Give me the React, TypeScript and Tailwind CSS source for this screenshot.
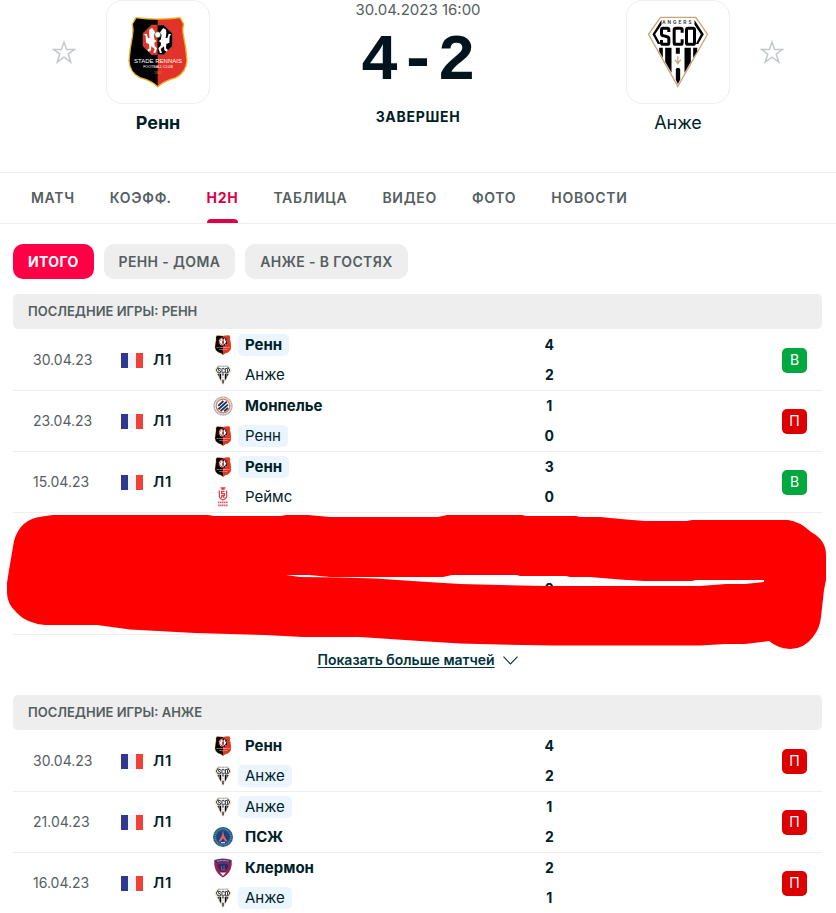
import type { ReactNode } from "react";

type Club = "rennes" | "angers" | "montpellier" | "reims" | "psg" | "clermont";

type Side = { club: Club; name: string; score: number; winner?: boolean };

type Match = {
    date: string;
    home: Side;
    away: Side;
    result: "В" | "П";
};

const rennesMatches: Match[] = [
    {
        date: "30.04.23",
        home: { club: "rennes", name: "Ренн", score: 4, winner: true },
        away: { club: "angers", name: "Анже", score: 2 },
        result: "В",
    },
    {
        date: "23.04.23",
        home: { club: "montpellier", name: "Монпелье", score: 1, winner: true },
        away: { club: "rennes", name: "Ренн", score: 0 },
        result: "П",
    },
    {
        date: "15.04.23",
        home: { club: "rennes", name: "Ренн", score: 3, winner: true },
        away: { club: "reims", name: "Реймс", score: 0 },
        result: "В",
    },
];

const angersMatches: Match[] = [
    {
        date: "30.04.23",
        home: { club: "rennes", name: "Ренн", score: 4, winner: true },
        away: { club: "angers", name: "Анже", score: 2 },
        result: "П",
    },
    {
        date: "21.04.23",
        home: { club: "angers", name: "Анже", score: 1 },
        away: { club: "psg", name: "ПСЖ", score: 2, winner: true },
        result: "П",
    },
    {
        date: "16.04.23",
        home: { club: "clermont", name: "Клермон", score: 2, winner: true },
        away: { club: "angers", name: "Анже", score: 1 },
        result: "П",
    },
];

const tabs = ["Матч", "Коэфф.", "H2H", "Таблица", "Видео", "Фото", "Новости"];
const filters = ["Итого", "Ренн - Дома", "Анже - В гостях"];

function RennesLogo({ className }: { className: string }) {
    return (
        <svg viewBox="262 46 184 216" className={className} aria-hidden="true">
            <path
                d="M288 51 Q353 60 420 51 L431 70 Q426 86 431 108 Q438 140 441 180 Q438 216 408 231 Q372 241 353 258 Q336 241 300 231 Q269 216 267 180 Q270 140 277 108 Q281 86 277 70 Z"
                fill="#000"
            />
            <path d="M353 56 Q390 56 420 51 L431 70 Q426 86 431 108 Q438 140 441 180 Q438 216 408 231 Q372 241 353 258 Z" fill="#e1332a" />
            <path
                d="M288 51 Q353 60 420 51 L431 70 Q426 86 431 108 Q438 140 441 180 Q438 216 408 231 Q372 241 353 258 Q336 241 300 231 Q269 216 267 180 Q270 140 277 108 Q281 86 277 70 Z"
                fill="none"
                stroke="#f5b324"
                strokeWidth="4"
            />
            <path d="M353 73 H335 L309 98 V136 L335 162 H353 Z" fill="#e1332a" />
            <path d="M353 73 H371 L397 98 V136 L371 162 H353 Z" fill="#000" />
            <path d="M353 73 H371 L397 98 V136 L371 162 H335 L309 136 V98 L335 73 Z" fill="none" stroke="#8d6a68" strokeWidth="1.5" />
            <path
                d="M336 82 L341 88 L347 97 L341 103 L344 117 L350 121 L343 126 L344 135 L351 143 L346 157 L340 156 L344 145 L334 137 L333 149 L326 153 L322 148 L328 143 L327 130 L318 126 L317 106 L312 101 L320 99 L324 112 L329 112 L327 96 L328 87 Z"
                fill="#fff"
            />
            <path
                d="M370 82 L365 88 L359 97 L365 103 L362 117 L356 121 L363 126 L362 135 L355 143 L360 157 L366 156 L362 145 L372 137 L373 149 L380 153 L384 148 L378 143 L379 130 L388 126 L389 106 L394 101 L386 99 L382 112 L377 112 L379 96 L378 87 Z"
                fill="#fff"
            />
            <circle cx="353" cy="102" r="9" fill="#fff" stroke="#444" strokeWidth="2" />
            <g fill="#fff" textAnchor="middle" fontFamily="'Liberation Sans', sans-serif">
                <text x="354" y="188" fontSize="18">STADE RENNAIS</text>
                <text x="354" y="203" fontSize="11">FOOTBALL CLUB</text>
                <text x="354" y="220" fontSize="11" fill="#c98b2e">1901</text>
            </g>
        </svg>
    );
}

function AngersLogo({ className }: { className: string }) {
    return (
        <svg viewBox="140 46 185 216" className={className} aria-hidden="true">
            <path d="M180 50 H286 L321 101 L232 257 L144 101 Z" fill="#fff" stroke="#c6a878" strokeWidth="4" />
            <path d="M183 58 L156 101 L172 130 L180 130 L164 101 L183 72 Z" fill="#000" />
            <path d="M282 58 L310 101 L293 130 L286 130 L301 101 L282 72 Z" fill="#000" />
            <path
                d="M176 141 H187 V171 L176 152 Z M194 141 H213 V216 L194 183 Z M226 141 H238 V159 H226 Z M252 141 H271 V183 L252 216 Z M278 141 H290 V152 L278 171 Z"
                fill="#000"
            />
            <path d="M226 205 Q232 198 239 205 V237 L232 250 L226 237 Z" fill="#000" />
            <path d="M232 167 V189 M223 177 L232 189 L241 177" fill="none" stroke="#c6a878" strokeWidth="4" />
            <text x="232" y="71" fontSize="15" fill="#222" textAnchor="middle" fontFamily="'Roboto', sans-serif" fontWeight="500" letterSpacing="6">
                ANGERS
            </text>
            {/* SCO monogram strokes */}
            <path
                d="M205 94 V88 Q205 83 200 83 H188 Q183 83 183 88 V99 Q183 104 188 105 L200 108 Q205 109 205 114 V126 Q205 131 200 131 H188 Q183 131 183 126 V118 M245 96 V88 Q245 83 240 83 H226 Q221 83 221 88 V126 Q221 131 226 131 H240 Q245 131 245 126 V116 M263 83 H277 Q282 83 282 88 V126 Q282 131 277 131 H263 Q258 131 258 126 V88 Q258 83 263 83 Z"
                fill="none"
                stroke="#000"
                strokeWidth="9"
            />
        </svg>
    );
}

function MontpellierLogo({ className }: { className: string }) {
    return (
        <svg viewBox="0 0 20 20" className={className} aria-hidden="true">
            <circle cx="10" cy="10" r="9" fill="#e6e9ee" stroke="#8f96a5" strokeWidth="1.2" strokeDasharray="1.2 0.4" />
            <circle cx="10" cy="10" r="6.8" fill="#fff" stroke="#e27843" strokeWidth="1.2" />
            <path d="M5.2 9.8 L10.4 5 M5.4 13.2 L13.8 5.8 M7.6 15 L15 8.6 M11.2 15.2 L15 12" stroke="#1e3160" strokeWidth="1.8" />
        </svg>
    );
}

function ReimsLogo({ className }: { className: string }) {
    return (
        <svg viewBox="0 0 20 20" className={className} aria-hidden="true">
            <g fill="none" stroke="#df3a45" strokeWidth="1.2">
                <path d="M7.5 0.8 H12.5 M8.4 2.2 H11.6" />
                <path d="M6.3 3.5 V9.5 Q6.8 12 10 13 Q13.2 12 13.7 9.5 V3.5" />
                <path d="M11.6 4.4 H8.6 V6.6 H11.4 V8.6 H8.4 M8.7 11 V8.6 M11.3 11 L10 9" />
            </g>
            <path d="M5 15.3 H15 M5 18.3 H15" stroke="#e4606a" strokeWidth="1.8" strokeDasharray="1.5 0.4" />
        </svg>
    );
}

function PsgLogo({ className }: { className: string }) {
    return (
        <svg viewBox="0 0 20 20" className={className} aria-hidden="true">
            <circle cx="10" cy="10" r="10" fill="#2d5c88" />
            <circle cx="10" cy="10" r="8" fill="none" stroke="#6a91b3" strokeWidth="1.2" strokeDasharray="1 1" />
            <circle cx="10" cy="10" r="6.5" fill="#17447a" />
            <path d="M10 3.2 L11 8.5 L14.6 14.5 H12.4 L10 11.4 L7.6 14.5 H5.4 L9 8.5 Z" fill="#e4616c" />
            <path d="M8 15.6 H12" stroke="#d6dfe8" strokeWidth="1.2" />
        </svg>
    );
}

function ClermontLogo({ className }: { className: string }) {
    return (
        <svg viewBox="0 0 20 20" className={className} aria-hidden="true">
            <path d="M1.3 2 Q10 -1 18.7 2 V7 Q17.5 15.5 10 19.6 Q2.5 15.5 1.3 7 Z" fill="#9c1f50" />
            <path d="M2.3 2.8 Q10 0.4 17.7 2.8 V5 Q10 3.4 2.3 5 Z" fill="#1f3c7c" />
            <path d="M4.2 3.3 Q10 1.9 15.8 3.3" stroke="#dfe5f1" strokeWidth="0.9" fill="none" strokeDasharray="1 0.4" />
            <path d="M4.5 6.5 Q10 5 15.5 6.5 Q15 11.5 10 15 Q5 11.5 4.5 6.5 Z" fill="#202f68" />
            <path d="M8.5 8 V12 M11 7.6 V12 M8.5 12 H12.5" stroke="#b9447a" strokeWidth="1" fill="none" />
            <path d="M6.8 14.6 H13.2 L10 18 Z" fill="#e8ecf6" />
        </svg>
    );
}

const logos = {
    rennes: RennesLogo,
    angers: AngersLogo,
    montpellier: MontpellierLogo,
    reims: ReimsLogo,
    psg: PsgLogo,
    clermont: ClermontLogo,
};

function FavouriteButton({ team }: { team: string }) {
    return (
        <button type="button" aria-label={`Добавить ${team} в избранное`} className="mt-10 h-6 w-6 shrink-0">
            <svg viewBox="0 0 24 24" className="h-6 w-6" fill="none" stroke="#c3c9cc" strokeWidth="1.5">
                <path d="M12 2 L14.6 9.4 H22.6 L16.2 14.1 L18.7 22 L12 17.2 L5.3 22 L7.8 14.1 L1.4 9.4 H9.4 Z" />
            </svg>
        </button>
    );
}

function HeaderTeam({ name, bold, children }: { name: string; bold?: boolean; children: ReactNode }) {
    return (
        <div className="flex w-26 shrink-0 flex-col items-center">
            <div className="flex h-26 w-26 items-center justify-center rounded-2xl border border-[#eeeeee]">{children}</div>
            <a href="#team" className={bold ? "mt-[5px] text-lg leading-7 font-bold" : "mt-[5px] text-lg leading-7"}>
                {name}
            </a>
        </div>
    );
}

function TeamLine({ side, highlighted }: { side: Side; highlighted: boolean }) {
    const Logo = logos[side.club];
    return (
        <div className="flex h-[30px] items-center gap-[5px]">
            <Logo className="h-5 w-5" />
            <span
                className={`rounded-[5px] px-[7px] text-[15px] leading-[22px] ${highlighted ? "bg-[#ebf5ff]" : ""} ${side.winner ? "font-bold" : ""}`}
            >
                {side.name}
            </span>
        </div>
    );
}

function MatchRow({ match, club }: { match: Match; club: Club }) {
    return (
        <tr className="group">
            <td className="border-t border-[#eeeeee] pl-5 text-sm text-[#555e61] group-first:border-t-0">{match.date}</td>
            <td className="border-t border-[#eeeeee] group-first:border-t-0">
                <div className="flex items-center gap-2.5">
                    <svg viewBox="0 0 22 15" className="h-[15px] w-[22px]" role="img" aria-label="Франция">
                        <path d="M0 0H7V15H0Z" fill="#2e3792" />
                        <path d="M7 0H15V15H7Z" fill="#f4f4f4" />
                        <path d="M15 0H22V15H15Z" fill="#ef4135" />
                    </svg>
                    <span className="text-[15px] font-semibold tracking-wider">Л1</span>
                </div>
            </td>
            <td className="border-t border-[#eeeeee] group-first:border-t-0">
                <TeamLine side={match.home} highlighted={match.home.club === club} />
                <TeamLine side={match.away} highlighted={match.away.club === club} />
            </td>
            <td className="border-t border-[#eeeeee] text-center text-sm font-bold group-first:border-t-0">
                <div className="leading-[30px]">{match.home.score}</div>
                <div className="leading-[30px]">{match.away.score}</div>
            </td>
            <td className="border-t border-[#eeeeee] pr-[15px] group-first:border-t-0">
                <span
                    className={`ml-auto flex h-[25px] w-[25px] items-center justify-center rounded-[5px] text-sm text-white ${match.result === "В" ? "bg-[#00a83f]" : "bg-[#dc0000]"}`}
                >
                    {match.result}
                </span>
            </td>
        </tr>
    );
}

function MatchList({ title, matches, club, children }: { title: string; matches: Match[]; club: Club; children?: ReactNode }) {
    return (
        <>
            <h2 className="mb-px rounded-[5px] bg-[#eeeeee] px-[15px] text-[13px] leading-[35px] font-semibold text-[#555e61] uppercase">
                {title}
            </h2>
            <table className="w-full table-fixed border-separate border-spacing-0">
                <colgroup>
                    <col className="w-[108px]" />
                    <col className="w-[92px]" />
                    <col />
                    <col className="w-[60px]" />
                    <col className="w-[30%]" />
                </colgroup>
                <tbody>
                    {matches.map((match) => (
                        <MatchRow key={match.date} match={match} club={club} />
                    ))}
                    {children}
                </tbody>
            </table>
        </>
    );
}

// Marker strokes over the two rows that are hidden from the list
function Scribble() {
    return (
        <svg
            viewBox="0 515 836 135"
            preserveAspectRatio="none"
            className="pointer-events-none absolute inset-x-0 top-[221px] h-[135px] w-full"
            aria-hidden="true"
        >
            <path
                fill="#ff0000"
                fillRule="evenodd"
                d="M53 515 H208 L214 516 H281 L286 515 H308 L330 517 H438 L447 515 H522 L526 516 H576 L580 517 H600 L626 519.5 L645 521 H687 L692 520 H788 Q799 521 811 532 Q826 540 826 555 V580 L824 590 L821 617 Q820 628 813 637 Q804 649 790 649 Q777 648 769 641 L745 644 H726 L700 645.5 H555 L500 644.5 L460 643.5 L420 641 L360 637 H303 L265 635 L195 633 L130 629.5 L97 625 H45 Q26 623 17 613 Q7 604 7 593 V583 L9 570 L14 541 Q20 519 42 516.5 Z
                M286 575 H309 L330 577 H443 L452 575 H517 L520 576 H566 L570 577 H590 L620 579.5 L644 581 H692 L696 580 H764 V582 L745 584 H726 L700 586 H545 L500 585 L460 584 L420 581.5 L375 578.5 L340 577.5 L300 577 Z"
            />
        </svg>
    );
}

export default function App() {
    return (
        <div className="min-h-screen bg-white font-['Inter','Noto_Sans',sans-serif] text-[#001e28]">
            <header className="mx-auto flex max-w-[732px] justify-between">
                <div className="flex gap-[30px]">
                    <FavouriteButton team="Ренн" />
                    <HeaderTeam name="Ренн" bold>
                        <RennesLogo className="h-18 w-16" />
                    </HeaderTeam>
                </div>
                <div className="flex flex-col items-center">
                    <time className="text-[15px] leading-5 text-[#555e61]">30.04.2023 16:00</time>
                    <div className="mt-3 font-['Liberation_Mono',monospace] text-[64px] leading-[60px] font-bold text-[#00141e]">4-2</div>
                    <div className="mt-[15px] text-sm leading-5 font-bold tracking-wider uppercase">Завершен</div>
                </div>
                <div className="flex gap-[30px]">
                    <HeaderTeam name="Анже">
                        <AngersLogo className="h-18 w-16" />
                    </HeaderTeam>
                    <FavouriteButton team="Анже" />
                </div>
            </header>

            <nav className="mt-[35px] flex gap-[35px] border-y border-[#eeeeee] px-[31px]">
                {tabs.map((tab) => (
                    <a
                        key={tab}
                        href="#tab"
                        className={
                            tab === "H2H"
                                ? "relative flex h-[50px] items-center text-sm font-bold tracking-wider text-[#dc0046] uppercase"
                                : "flex h-[50px] items-center text-sm font-semibold tracking-wider text-[#555e61] uppercase"
                        }
                    >
                        {tab}
                        {tab === "H2H" && <span className="absolute inset-x-0 bottom-0 h-1 rounded-t-sm bg-[#dc0046]" />}
                    </a>
                ))}
            </nav>

            <div className="mt-5 flex gap-2.5 px-[13px]">
                {filters.map((filter, i) => (
                    <button
                        key={filter}
                        type="button"
                        className={
                            i === 0
                                ? "h-[35px] rounded-[10px] bg-[#ff0046] px-[15px] text-sm font-bold tracking-wide text-white uppercase"
                                : "h-[35px] rounded-[10px] bg-[#eeeeee] px-[15px] text-sm font-semibold tracking-wide text-[#555e61] uppercase"
                        }
                    >
                        {filter}
                    </button>
                ))}
            </div>

            <section className="relative mt-[15px] pr-3.5 pl-[13px]">
                <MatchList title="Последние игры: Ренн" matches={rennesMatches} club="rennes">
                    <tr>
                        <td colSpan={5} className="h-[61px] border-t border-[#eeeeee]" />
                    </tr>
                    <tr>
                        <td colSpan={3} className="h-[61px] border-t border-[#eeeeee]" />
                        <td className="border-t border-[#eeeeee] pb-[30px] text-center text-sm font-bold">
                            <div className="leading-[30px]">0</div>
                        </td>
                        <td className="border-t border-[#eeeeee]" />
                    </tr>
                </MatchList>
                <div className="flex h-[61px] items-center justify-center border-t border-[#eeeeee] pb-2.5 text-[#00323c]">
                    <a href="#more" className="flex items-center gap-2 text-sm font-semibold">
                        <span className="underline underline-offset-2">Показать больше матчей</span>
                        <svg viewBox="0 0 15 9" className="h-[9px] w-[15px]" fill="none" stroke="currentColor" strokeWidth="1.1">
                            <path d="M0.5 0.7 L7.5 8 L14.5 0.7" />
                        </svg>
                    </a>
                </div>
                <Scribble />
            </section>

            <section className="pr-3.5 pl-[13px]">
                <MatchList title="Последние игры: Анже" matches={angersMatches} club="angers" />
            </section>
        </div>
    );
}
